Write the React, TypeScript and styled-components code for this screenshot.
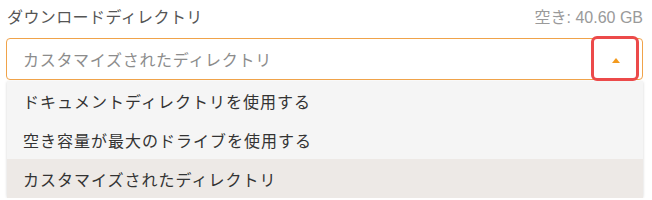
import React from "react";
import styled, { createGlobalStyle } from "styled-components";

const Global = createGlobalStyle`
  html, body { margin: 0; padding: 0; background: #ffffff; }
  body { font-family: "Liberation Sans", "Noto Sans CJK JP", sans-serif; }
`;

const Panel = styled.div`
  width: 637px;
  margin-left: 6px;
  display: flex;
  flex-direction: column;
`;

const Header = styled.div`
  display: flex;
  justify-content: space-between;
  align-items: center;
  padding: 8px 0 0 1px;
  height: 20px;
  margin-bottom: 10px;
`;

const Label = styled.span`
  font-size: 16px;
  line-height: 20px;
  color: #555555;
  letter-spacing: 0.4px;
`;

const Free = styled.span`
  font-size: 16px;
  line-height: 20px;
  color: #9a9a9a;
`;

const SelectWrap = styled.div`
  position: relative;
`;

const SelectBox = styled.div`
  height: 40px;
  border: 1px solid #f0a34a;
  border-radius: 4px;
  background: #ffffff;
  display: flex;
  align-items: center;
  justify-content: space-between;
  padding: 0 22px 0 16px;
`;

const Placeholder = styled.span`
  font-size: 16px;
  color: #8c8c8c;
  letter-spacing: 0.7px;
`;

const Arrow = styled.span`
  width: 0;
  height: 0;
  border-left: 4px solid transparent;
  border-right: 4px solid transparent;
  border-bottom: 5px solid #f39a1e;
  margin-top: 3px;
`;

const Highlight = styled.div`
  position: absolute;
  left: 585px;
  top: -2px;
  width: 42px;
  height: 39px;
  border: 3px solid #ec4a4a;
  border-radius: 6px;
  pointer-events: none;
  z-index: 2;
`;

const Menu = styled.ul`
  list-style: none;
  margin: 1px 0 0 1px;
  padding: 0;
  background: #f5f5f5;
  box-shadow: 0 1px 3px rgba(0, 0, 0, 0.18);
  border-radius: 0 0 4px 4px;
`;

const Item = styled.li<{ $active?: boolean }>`
  height: 39px;
  display: flex;
  align-items: center;
  padding-left: 16px;
  font-size: 16px;
  letter-spacing: 1px;
  color: #333333;
  background: ${(p) => (p.$active ? "#ede9e6" : "transparent")};
`;

export default function App() {
  return (
    <>
      <Global />
      <Panel>
        <Header>
          <Label>ダウンロードディレクトリ</Label>
          <Free>空き: 40.60 GB</Free>
        </Header>
        <SelectWrap>
          <SelectBox>
            <Placeholder>カスタマイズされたディレクトリ</Placeholder>
            <Arrow />
          </SelectBox>
          <Highlight />
        </SelectWrap>
        <Menu>
          <Item>ドキュメントディレクトリを使用する</Item>
          <Item>空き容量が最大のドライブを使用する</Item>
          <Item $active>カスタマイズされたディレクトリ</Item>
        </Menu>
      </Panel>
    </>
  );
}
